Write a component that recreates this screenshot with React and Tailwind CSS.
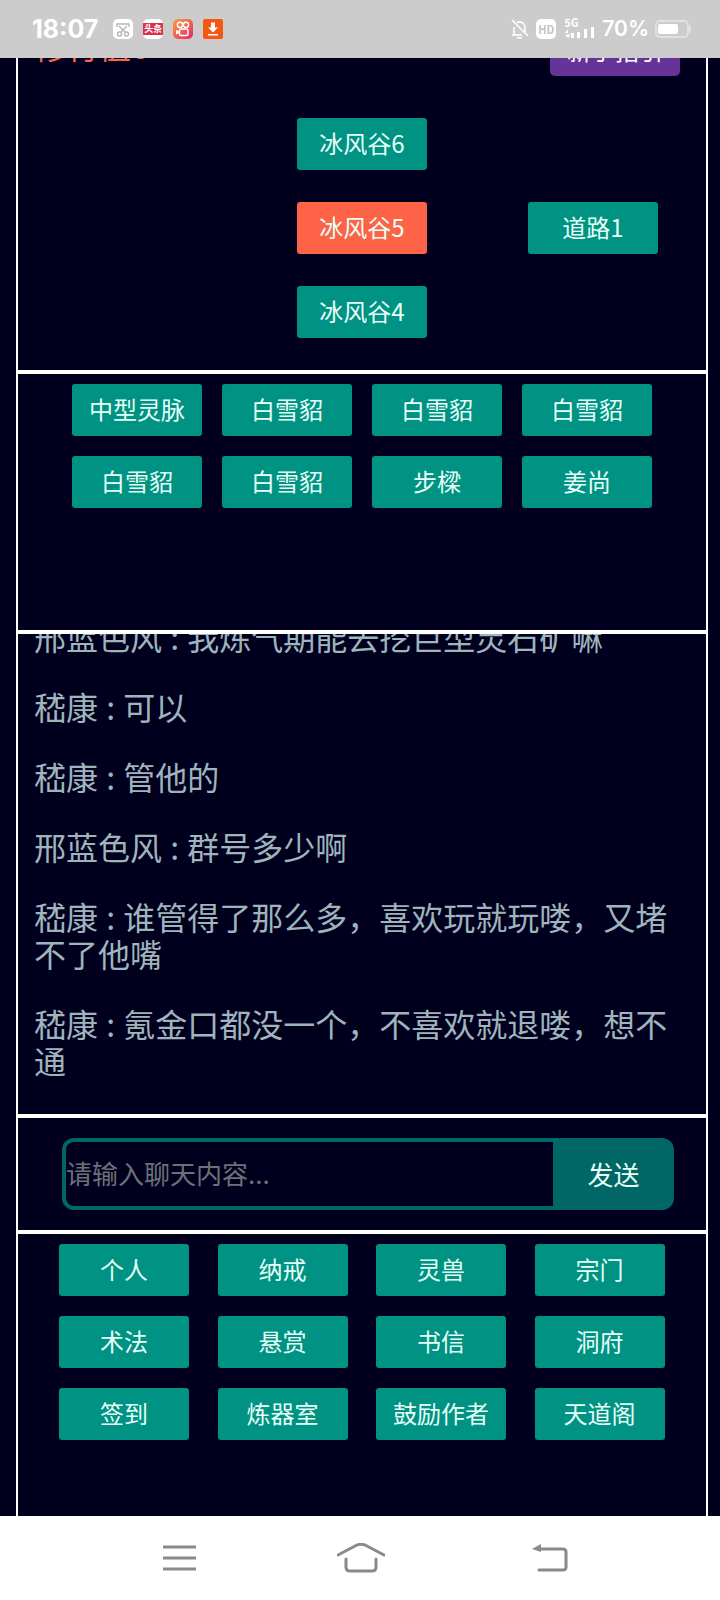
import React from "react";

const fontCn = "font-['Noto_Sans_CJK_SC','Noto_Sans',sans-serif]";

// 通用绿色按钮
const GameBtn = ({ label, active }) => (
    <div
        className={`w-[130px] h-[52px] pb-[2px] rounded-[3px] flex items-center justify-center text-[24px] text-[#e6fff8] ${
            active ? "bg-[#ff6347]" : "bg-[#009282]"
        }`}
    >
        {label}
    </div>
);

const StatusIcons = () => (
    <div className="flex items-center gap-[10px] ml-[15px]">
        <svg width="20" height="20" viewBox="0 0 20 20">
            <rect width="20" height="20" rx="5" fill="#fff" />
            <path d="M4 8V5h12v3" fill="none" stroke="#b5b5b5" strokeWidth="1.4" />
            <path d="M6 7l6 6M14 7l-6 6" fill="none" stroke="#b5b5b5" strokeWidth="1.4" />
            <circle cx="6.5" cy="15" r="2" fill="none" stroke="#b5b5b5" strokeWidth="1.4" />
            <circle cx="13.5" cy="15" r="2" fill="none" stroke="#b5b5b5" strokeWidth="1.4" />
        </svg>
        <div className="w-[20px] h-[20px] rounded-[5px] bg-white flex items-center overflow-hidden">
            <div className="w-full h-[12px] bg-[#d8324c] text-white text-[9px] font-bold leading-[12px] text-center">头条</div>
        </div>
        <svg width="20" height="20" viewBox="0 0 20 20">
            <defs>
                <linearGradient id="ks" x1="0" y1="0" x2="1" y2="1">
                    <stop offset="0" stopColor="#f9a03a" />
                    <stop offset="1" stopColor="#e8246a" />
                </linearGradient>
            </defs>
            <rect width="20" height="20" rx="5" fill="url(#ks)" />
            <circle cx="7" cy="5.8" r="2.6" fill="none" stroke="#fff" strokeWidth="1.5" />
            <circle cx="13" cy="5.8" r="2.6" fill="none" stroke="#fff" strokeWidth="1.5" />
            <rect x="6.5" y="10" width="8.5" height="6.5" rx="1.5" fill="none" stroke="#fff" strokeWidth="1.5" />
            <path d="M3 11v4.5l3-1.5v-2z" fill="#fff" />
        </svg>
        <svg width="20" height="20" viewBox="0 0 20 20">
            <rect width="20" height="20" rx="2" fill="#f4570f" />
            <path d="M8 3.5h4v5h3l-5 5-5-5h3z" fill="#fff" />
            <rect x="5" y="15" width="10" height="1.5" fill="#fff" />
        </svg>
    </div>
);

const StatusRight = () => (
    <div className="flex items-center text-white">
        <svg width="18" height="20" viewBox="0 0 18 20" fill="none" stroke="#fff" strokeWidth="1.6">
            <path d="M3 15V8M6 3.5A5.5 5.5 0 0 1 14 8v5" />
            <path d="M1 16h10" />
            <path d="M6 18.8h5" />
            <path d="M1 1l16 16" />
        </svg>
        <div className="ml-[7px] w-[20px] h-[20px] rounded-[5px] bg-white text-[#c4c4c4] text-[11px] font-bold leading-[20px] text-center">HD</div>
        <div className="ml-[7px] w-[32px] h-[20px] relative">
            <span className="absolute left-[1px] top-[-3px] text-[11px] leading-[12px] font-bold">5G</span>
            <svg className="absolute left-0 top-0" width="32" height="20" viewBox="0 0 32 20" fill="#fff">
                <path d="M2 14l3-4v4zM2 15.500h6l-3 3.500z" />
                <rect x="8" y="14" width="3" height="5" />
                <rect x="14" y="13" width="3" height="6" />
                <rect x="21" y="10" width="3" height="9" />
                <rect x="28" y="8" width="3" height="11" />
            </svg>
        </div>
        <span className="ml-[7px] text-[21px] leading-[24px] font-semibold font-['Inter',sans-serif]">70%</span>
        <div className="relative ml-[6px] w-[34px] h-[18px] rounded-[5px] border-2 border-white/40 px-[1px] py-[2px]">
            <div className="w-[20px] h-full rounded-[2px] bg-white" />
            <div className="absolute right-[-4px] top-[3px] w-[2px] h-[8px] rounded-r-[2px] bg-white/40" />
        </div>
    </div>
);

const chatList = [
    "嵇康 : 可以",
    "嵇康 : 管他的",
    "邢蓝色风 : 群号多少啊",
    "嵇康 : 谁管得了那么多，喜欢玩就玩喽，又堵不了他嘴",
    "嵇康 : 氪金口都没一个，不喜欢就退喽，想不通",
];

const menuList = ["个人", "纳戒", "灵兽", "宗门", "术法", "悬赏", "书信", "洞府", "签到", "炼器室", "鼓励作者", "天道阁"];
const npcList = ["中型灵脉", "白雪貂", "白雪貂", "白雪貂", "白雪貂", "白雪貂", "步樑", "姜尚"];

const App = () => {
    return (
        <div className={`relative w-[720px] h-[1600px] overflow-hidden bg-[#00001e] ${fontCn}`}>
            {/* 系统状态栏 */}
            <div className="absolute top-0 left-0 z-10 w-full h-[58px] bg-[#cccccc] flex items-center justify-between pl-[32px] pr-[31px]">
                <div className="flex items-center">
                    <span className="text-white text-[25px] font-bold leading-none font-['Inter',sans-serif]">18:07</span>
                    <StatusIcons />
                </div>
                <StatusRight />
            </div>

            {/* 页面内容 */}
            <div className="h-[1516px] w-[692px] ml-[16px] border-x-2 border-white overflow-hidden flex flex-col">
                {/* 地图 */}
                <div className="h-[370px] shrink-0">
                    <div className="pt-[24px] pl-[17px] pr-[26px] flex items-start justify-between">
                        <span className="mt-[3px] text-[#ff6347] text-[32px] leading-[37px]">修行值6</span>
                        <div className="w-[130px] h-[52px] rounded-[5px] bg-[#663399] flex items-center justify-center text-white text-[24px]">新手指引</div>
                    </div>
                    <div className="mt-[42px] flex flex-col gap-[32px] pl-[279px]">
                        <GameBtn label="冰风谷6" />
                        <div className="flex gap-[101px]">
                            <GameBtn label="冰风谷5" active />
                            <GameBtn label="道路1" />
                        </div>
                        <GameBtn label="冰风谷4" />
                    </div>
                </div>

                {/* 人物 */}
                <div className="h-[260px] shrink-0 border-t-4 border-white pt-[10px] pl-[54px]">
                    <div className="grid grid-cols-[130px_130px_130px_130px] gap-x-[20px] gap-y-[20px]">
                        {npcList.map((name, i) => (
                            <GameBtn key={i} label={name} />
                        ))}
                    </div>
                </div>

                {/* 聊天 */}
                <div className="h-[484px] shrink-0 border-t-4 border-white overflow-hidden px-[16px] pb-[35px] flex flex-col justify-end text-[32px] leading-[37px] text-[#9fb4bb] [word-spacing:1px]">
                    <p className="shrink-0 mb-[33px]">邢蓝色风 : 我炼气期能去挖巨型灵石矿嘛</p>
                    {chatList.map((msg, i) => (
                        <p key={i} className={`shrink-0 ${i === chatList.length - 1 ? "" : "mb-[33px]"}`}>
                            {msg}
                        </p>
                    ))}
                </div>

                {/* 输入框 */}
                <div className="h-[120px] shrink-0 border-y-4 border-white pl-[44px] flex items-center">
                    <div className="w-[612px] h-[72px] shrink-0 flex rounded-[12px] bg-[#006666] p-[4px] pr-0">
                        <div className="w-[487px] h-full pb-[3px] rounded-l-[8px] bg-[#00001e] text-[#6d7178] text-[26px] flex items-center">请输入聊天内容...</div>
                        <div className="flex-1 pb-[2px] flex items-center justify-center text-[#e6fff8] text-[26px]">发送</div>
                    </div>
                </div>

                {/* 菜单 */}
                <div className="flex-1 pt-[10px] pl-[41px]">
                    <div className="grid grid-cols-[130px_130px_130px_130px] gap-x-[28.5px] gap-y-[20px]">
                        {menuList.map((name) => (
                            <GameBtn key={name} label={name} />
                        ))}
                    </div>
                </div>
            </div>

            {/* 底部导航 */}
            <div className="h-[84px] bg-white flex items-start pl-[163px] pt-[28px]">
                <svg width="34" height="28" viewBox="0 0 34 28" fill="none" stroke="#8a8a8a" strokeWidth="3">
                    <path d="M0 3h33M0 14h33M0 25h33" />
                </svg>
                <svg className="ml-[140px] -mt-[1px]" width="48" height="30" viewBox="0 0 48 30" fill="none" stroke="#8a8a8a" strokeWidth="3" strokeLinecap="round" strokeLinejoin="round">
                    <path d="M1 12L19 2.500q5-2.500 10 0L47 12" />
                    <path d="M9 16v8q0 4 4 4h22q4 0 4-4v-8" />
                </svg>
                <svg className="ml-[147px]" width="36" height="28" viewBox="0 0 36 28" fill="none" stroke="#8a8a8a" strokeWidth="3" strokeLinecap="round">
                    <path d="M6 5h25q3 0 3 3v15q0 3-3 3H7" />
                    <path d="M0 5l9-5v8z" fill="#8a8a8a" stroke="none" />
                </svg>
            </div>
        </div>
    );
};

export default App;
